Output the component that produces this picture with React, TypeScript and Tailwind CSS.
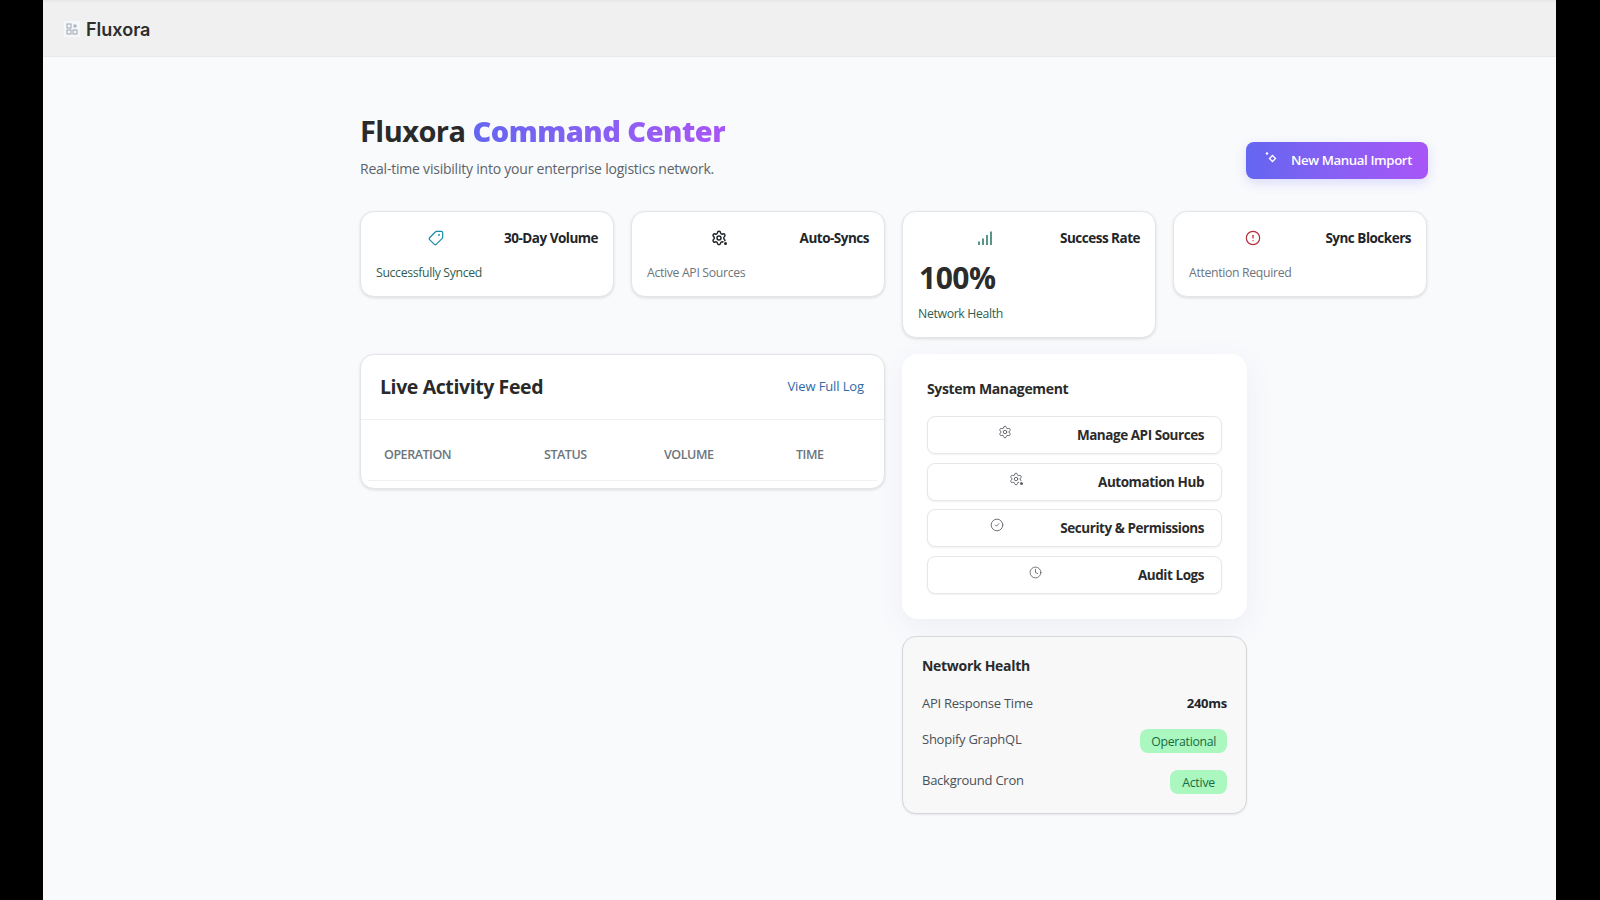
import { Tag, Settings, CircleAlert, CircleCheck, Clock } from 'lucide-react'

function StatCard({ icon, title, value, note, noteClass }: { icon: React.ReactNode; title: string; value?: string; note: string; noteClass: string }) {
  return (
    <div className="bg-white border border-[#e3e5e8] rounded-[14px] shadow-[0_1px_3px_rgba(0,0,0,0.12)] px-[15px] pt-[16px] pb-[14px]">
      <div className="flex items-center h-[20px]">
        <div className="flex-1 flex justify-center mr-2">{icon}</div>
        <span className="text-[13.5px] font-bold text-[#212529] tracking-[-0.5px]">{title}</span>
      </div>
      {value && <div className="text-[30px] leading-[36px] font-bold text-[#2b2b2b] mt-[12px] mb-[-7px] tracking-[-0.5px] pl-[1px]">{value}</div>}
      <p className={`text-[12.25px] leading-[18px] mt-[16px] tracking-[-0.33px] ${noteClass}`}>{note}</p>
    </div>
  )
}

function ManageButton({ icon, label }: { icon: React.ReactNode; label: string }) {
  return (
    <button type="button" className="flex items-center h-[38px] w-full bg-white border border-[#e5e7ea] rounded-lg shadow-[0_1px_2px_rgba(0,0,0,0.06)] pl-[17px] pr-[17px]">
      <span className="flex-1 flex justify-center mr-[11px] mb-[6px] text-[#5f6368]">{icon}</span>
      <span className="text-[13.5px] font-bold text-[#2b2b2b] tracking-[-0.45px]">{label}</span>
    </button>
  )
}

function GearDot({ size, color, stroke }: { size: number; color: string; stroke: number }) {
  return (
    <span className="relative inline-flex" style={{ color }}>
      <Settings size={size} strokeWidth={stroke} />
      <span className="absolute right-0 bottom-[1px] size-[3px] rounded-full bg-current ring-1 ring-white" />
    </span>
  )
}

export default function App() {
  return (
    <div className="flex h-[900px] w-[1600px] overflow-hidden bg-black font-['Open_Sans',sans-serif]">
      <div className="ml-[43px] w-[1513px] bg-[#f9fafc] flex flex-col">
        <header className="h-[57px] bg-[#f0f0f0] border-t-2 border-[#e8e8e8] border-b border-b-[#e9e9e9] flex items-center pl-[21px] shrink-0">
          <div className="size-[16px] bg-[#f6f7f8] flex items-center justify-center mr-[6px]">
            <svg width="12" height="12" viewBox="0 0 12 12" fill="none" stroke="#9aa5b1" strokeWidth="1">
              <rect x="1" y="1" width="4" height="4" />
              <rect x="1" y="7" width="4" height="4" />
              <rect x="7" y="7" width="4" height="4" />
              <path d="M9 1v4M7 3h4" />
            </svg>
          </div>
          <span className="text-[18px] font-semibold text-[#2d2d2d] font-['Inter',sans-serif]">Fluxora</span>
        </header>

        <main className="ml-[317px] w-[1068px] pt-[55px]">
          <div className="flex justify-between items-end">
            <div>
              <h1 className="text-[29px] leading-[38px] font-bold text-[#2a2a2a] tracking-[-0.55px]">
                Fluxora{' '}
                <span className="font-extrabold tracking-[-0.5px] bg-gradient-to-r from-[#6366f1] to-[#a855f7] bg-clip-text text-transparent">Command Center</span>
              </h1>
              <p className="text-[14px] leading-[20px] text-[#5c636a] mt-[9px] tracking-[-0.22px]">Real-time visibility into your enterprise logistics network.</p>
            </div>
            <button type="button" className="flex items-center h-[37px] w-[182px] rounded-lg bg-gradient-to-r from-[#6366f1] to-[#a855f7] shadow-[0_4px_12px_rgba(99,102,241,0.2)] pl-[18px] text-white text-[13.25px] font-semibold tracking-[-0.4px]">
              <svg width="16" height="16" viewBox="0 0 16 16" fill="none" className="mb-1 mr-[11px]">
                <circle cx="3" cy="2.5" r="1.2" fill="#fff" />
                <path d="M8.5 4.5 L11.5 7.5 L8.5 10.5 L5.5 7.5 Z" stroke="#fff" strokeWidth="1.3" />
              </svg>
              New Manual Import
            </button>
          </div>

          <div className="grid grid-cols-[254px_254px_254px_254px] gap-x-[17px] items-start mt-[32px]">
            <StatCard icon={<Tag size={16} strokeWidth={1.8} className="text-[#1b8aa6] -scale-x-100" />} title="30-Day Volume" note="Successfully Synced" noteClass="text-[#2f5d50]" />
            <StatCard icon={<GearDot size={16} color="#212529" stroke={2.2} />} title="Auto-Syncs" note="Active API Sources" noteClass="text-[#6c757d]" />
            <StatCard
              icon={
                <svg width="14" height="14" viewBox="0 0 14 14" stroke="#5a9688" strokeWidth="2">
                  <path d="M1 14v-3.5M5 14V7.5M9 14V4M13 14V0.5" />
                </svg>
              }
              title="Success Rate"
              value="100%"
              note="Network Health"
              noteClass="text-[#2f5d50]"
            />
            <StatCard icon={<CircleAlert size={16} strokeWidth={1.8} className="text-[#b52d3a]" />} title="Sync Blockers" note="Attention Required" noteClass="text-[#6c757d]" />
          </div>

          <div className="flex items-start gap-x-[17px] mt-[16px]">
            <section className="w-[525px] bg-white border border-[#e3e5e8] rounded-[14px] shadow-[0_1px_3px_rgba(0,0,0,0.12)]">
              <div className="flex justify-between items-center h-[65px] pl-[19px] pr-[20px] border-b border-[#eff0f2]">
                <h2 className="text-[19.5px] font-bold text-[#2a2a2a] tracking-[-0.4px]">Live Activity Feed</h2>
                <a className="text-[13px] text-[#2f6aa8] tracking-[-0.12px]">View Full Log</a>
              </div>
              <div className="mx-[7px] mb-[7px] grid grid-cols-[160px_120px_132px_1fr] h-[61px] items-center pl-[16px] pt-[11px] border-b border-[#f0f1f3] text-[12.5px] font-semibold text-[#6c757d] tracking-[-0.45px]">
                <span>OPERATION</span>
                <span>STATUS</span>
                <span>VOLUME</span>
                <span>TIME</span>
              </div>
            </section>

            <aside className="w-[345px] flex flex-col gap-y-[17px]">
              <section className="h-[265px] bg-white rounded-[16px] shadow-[0_8px_30px_rgba(80,90,140,0.07)] px-[25px] pt-[25px]">
                <h3 className="text-[14px] leading-[20px] font-bold text-[#2b2b2b] tracking-[-0.35px] mb-[17px]">System Management</h3>
                <div className="flex flex-col gap-y-[8.7px]">
                  <ManageButton icon={<Settings size={14} strokeWidth={1.6} />} label="Manage API Sources" />
                  <ManageButton icon={<GearDot size={14} color="#5f6368" stroke={1.6} />} label="Automation Hub" />
                  <ManageButton icon={<CircleCheck size={14} strokeWidth={1.5} />} label="Security & Permissions" />
                  <ManageButton icon={<Clock size={13} strokeWidth={1.6} />} label="Audit Logs" />
                </div>
              </section>

              <section className="h-[178px] bg-[#f8f8f9] border border-[#d5d7da] rounded-[14px] shadow-[0_1px_2px_rgba(0,0,0,0.08)] px-[19px] pt-[19px]">
                <h3 className="text-[14px] leading-[20px] font-bold text-[#2b2b2b] tracking-[-0.3px]">Network Health</h3>
                <div className="flex justify-between items-center mt-[18px] h-[20px] text-[13px] text-[#495057] tracking-[-0.25px]">
                  <span>API Response Time</span>
                  <span className="font-bold text-[#212529]">240ms</span>
                </div>
                <div className="flex justify-between items-start mt-[15px] text-[13px] leading-[20px] text-[#495057] tracking-[-0.25px]">
                  <span>Shopify GraphQL</span>
                  <span className="h-[24px] leading-[26px] px-[11px] rounded-lg bg-[#aaf7c0] text-[12.25px] tracking-[-0.3px] text-[#176b42]">Operational</span>
                </div>
                <div className="flex justify-between items-start mt-[17px] text-[13px] leading-[20px] text-[#495057] tracking-[-0.25px]">
                  <span>Background Cron</span>
                  <span className="h-[24px] leading-[26px] px-[12px] rounded-lg bg-[#aaf7c0] text-[12.25px] tracking-[-0.2px] text-[#176b42]">Active</span>
                </div>
              </section>
            </aside>
          </div>
        </main>
      </div>
    </div>
  )
}
